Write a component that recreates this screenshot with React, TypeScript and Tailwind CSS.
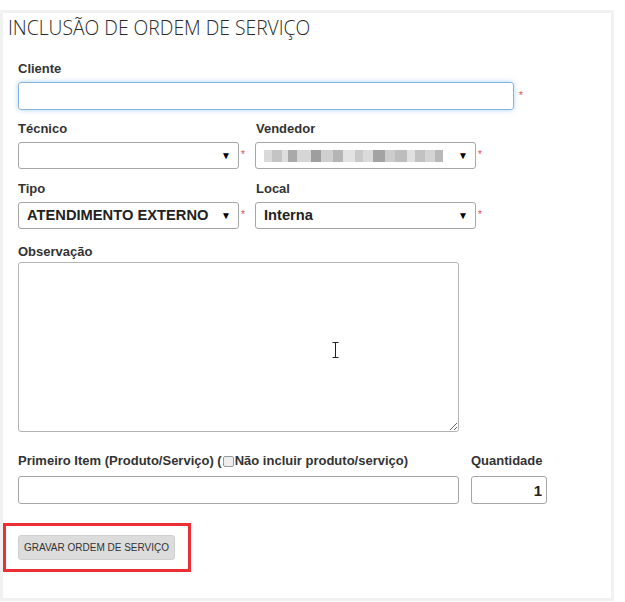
import React from "react";

const label = "block h-[16px] text-[13px] leading-[16px] font-bold text-[#333]";
const sans = { fontFamily: '"Liberation Sans", Arial, sans-serif' };

function Star() {
	return <span className="w-[8px] pl-[2px] text-[10px] leading-none text-[#e04b4b] self-start mt-[8px]">*</span>;
}

function Select({ value, width, children }: { value?: string; width: string; children?: React.ReactNode }) {
	return (
		<div className={`${width} h-[27px] flex items-center border border-[#a6a6a6] rounded-[3px] bg-white pl-[8px] pr-[7px]`}>
			<div className="flex-1 text-[14.7px] font-bold text-[#222] truncate">{value}{children}</div>
			<span className="text-[10px] text-black">▼</span>
		</div>
	);
}

function Blur() {
	const blocks = [
		["#d9d9d9", 8], ["#c4c4c4", 10], ["#dedede", 6], ["#a9a9a9", 9], ["#d6d6d6", 14], ["#9e9e9e", 10],
		["#cfcfcf", 12], ["#b5b5b5", 10], ["#e3e3e3", 12], ["#c9c9c9", 8], ["#dadada", 10], ["#a3a3a3", 12],
		["#cccccc", 10], ["#bdbdbd", 12], ["#e0e0e0", 8], ["#c2c2c2", 10], ["#d4d4d4", 10], ["#b8b8b8", 8],
	] as const;
	return (
		<div className="flex h-[12px] w-[180px]">
			{blocks.map(([c, w], i) => (
				<span key={i} className="h-full" style={{ background: c, width: w }} />
			))}
		</div>
	);
}

export default function App() {
	return (
		<div className="w-[625px] h-[602px] bg-white pt-[10px]" style={sans}>
			<div className="w-[614px] h-[591px] border-[3px] border-[#f1f1f1] bg-white pl-[15px]">
				<h1 className="-ml-[10px] mt-[3px] text-[19.3px] leading-[24px] font-light text-[#2a2a2a]" style={{ fontFamily: '"Open Sans", sans-serif' }}>
					INCLUSÃO DE ORDEM DE SERVIÇO
				</h1>

				<div className="mt-[21px]">
					<span className={label}>Cliente</span>
					<div className="flex mt-[5px]">
						<input className="w-[496px] h-[28px] border border-[#86b3d9] rounded-[3px] shadow-[0_0_5px_rgba(102,175,233,0.55)] outline-none" />
						<span className="pl-[5px] text-[10px] text-[#e04b4b] mt-[9px] leading-none">*</span>
					</div>
				</div>

				<div className="flex mt-[11px]">
					<div>
						<span className={label}>Técnico</span>
						<div className="flex mt-[5px]">
							<Select width="w-[221px]" />
							<Star />
						</div>
					</div>
					<div className="ml-[8px]">
						<span className={`${label} pl-[1px]`}>Vendedor</span>
						<div className="flex mt-[5px]">
							<Select width="w-[221px]">
								<Blur />
							</Select>
							<Star />
						</div>
					</div>
				</div>

				<div className="flex mt-[12px]">
					<div>
						<span className={label}>Tipo</span>
						<div className="flex mt-[5px]">
							<Select width="w-[221px]" value="ATENDIMENTO EXTERNO" />
							<Star />
						</div>
					</div>
					<div className="ml-[8px]">
						<span className={`${label} pl-[1px]`}>Local</span>
						<div className="flex mt-[5px]">
							<Select width="w-[221px]" value="Interna" />
							<Star />
						</div>
					</div>
				</div>

				<div className="mt-[15px] relative">
					<span className={label}>Observação</span>
					<textarea className="mt-[2px] block w-[441px] h-[170px] border border-[#b3b3b3] rounded-[3px] outline-none" />
					<svg className="absolute left-[314px] top-[98px]" width="7" height="16" viewBox="0 0 7 16">
						<path d="M0.5 0.5h6M3.5 0.5v15M0.5 15.5h6" stroke="#222" strokeWidth="1" fill="none" />
					</svg>
				</div>

				<div className="flex mt-[21px]">
					<div>
						<span className={`${label} flex items-center`}>
							Primeiro Item (Produto/Serviço) (
							<span className="inline-block w-[11px] h-[11px] border border-[#9a9a9a] rounded-[2px] bg-[#eee] mx-[1px]" />
							Não incluir produto/serviço)
						</span>
						<input className="mt-[7px] block w-[441px] h-[28px] border border-[#a6a6a6] rounded-[3px] outline-none" />
					</div>
					<div className="ml-[12px]">
						<span className={label}>Quantidade</span>
						<input
							defaultValue="1"
							className="mt-[7px] block w-[76px] h-[28px] border border-[#a6a6a6] rounded-[3px] outline-none text-right pr-[4px] text-[15px] font-bold text-[#222]"
						/>
					</div>
				</div>

				<div className="-ml-[15px] mt-[19px] w-[188px] h-[49px] border-[3px] border-[#ec2f35] flex items-center pl-[12px]">
					<button className="w-[157px] h-[25px] bg-[#dcdcdc] border border-[#cfcfcf] rounded-[3px] text-[10px] text-[#333]">
						GRAVAR ORDEM DE SERVIÇO
					</button>
				</div>
			</div>
		</div>
	);
}
